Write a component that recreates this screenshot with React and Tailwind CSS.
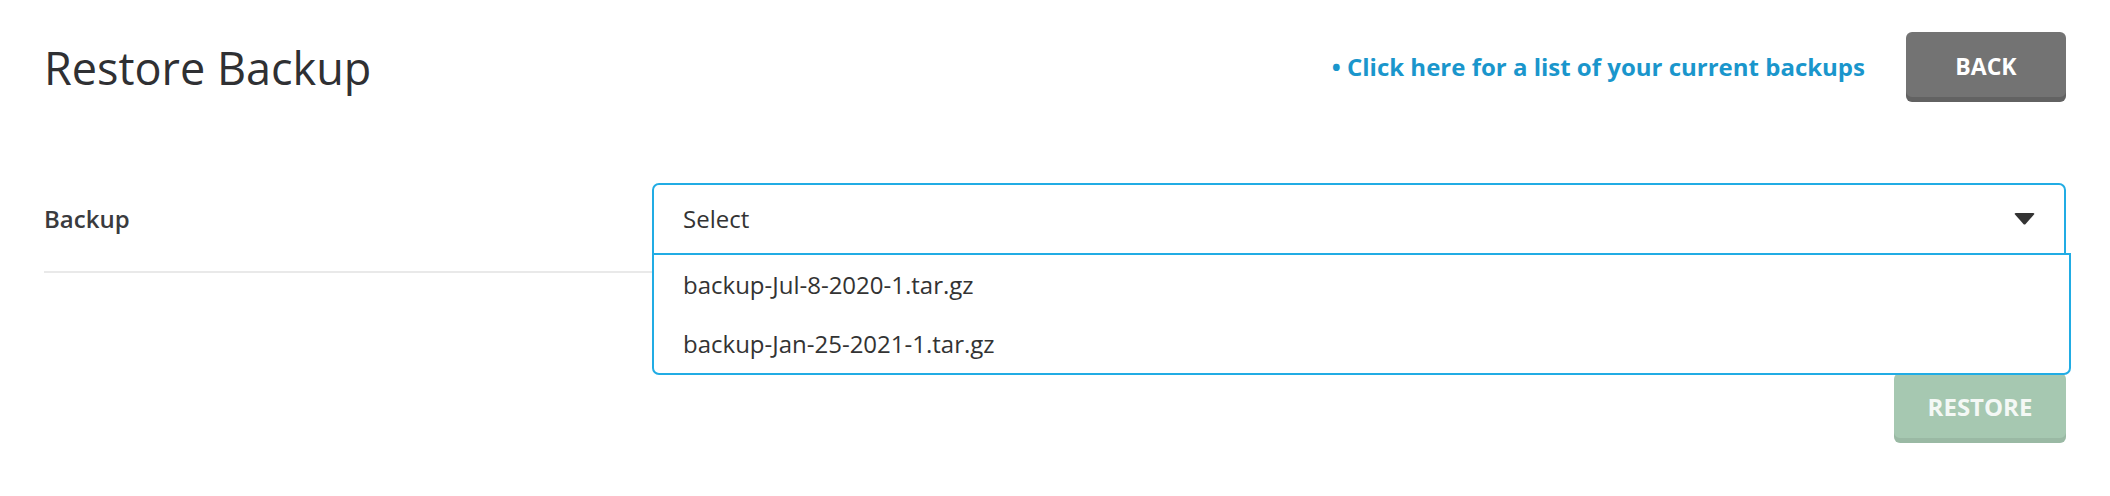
export default function App() {
  const backups = ['backup-Jul-8-2020-1.tar.gz', 'backup-Jan-25-2021-1.tar.gz']

  return (
    <div className="min-h-screen bg-white px-[44px] pt-[32px] font-['Open_Sans',sans-serif] text-[#333]">
      {/* Header */}
      <div className="flex h-[70px] items-center justify-between">
        <h1 className="text-[45px] leading-none font-normal text-[#2f3033]">Restore Backup</h1>
        <div className="flex items-center gap-[41px]">
          <a href="#" className="text-[24px] font-bold text-[#1a96cc]">• Click here for a list of your current backups</a>
          <button className="h-[70px] w-[160px] rounded-[6px] bg-[#737373] text-[23px] font-bold text-white shadow-[inset_0_-5px_0_rgba(0,0,0,0.14)]">
            <span className="relative -top-[1px]">BACK</span>
          </button>
        </div>
      </div>

      {/* Form row */}
      <div className="mt-[81px] flex items-center border-b-2 border-[#e9e9e9] pb-[16px]">
        <label className="w-[608px] shrink-0 text-[24px] font-semibold text-[#3a3b3e]">Backup</label>
        <div className="relative flex-1">
          <div className="flex h-[72px] items-center justify-between rounded-t-[7px] border-2 border-[#21ace4] pl-[29px] pr-[29px]">
            <span className="text-[24px] text-[#333]">Select</span>
            <svg width="21" height="12" viewBox="0 0 21 12" className="text-[#333]">
              <path d="M1 1.5 Q0 0 2 0 H19 Q21 0 20 1.5 L11.6 11 Q10.5 12 9.4 11 Z" fill="currentColor" />
            </svg>
          </div>
          <ul className="absolute left-0 -right-[5px] top-[calc(100%-2px)] z-10 rounded-b-[7px] border-2 border-[#21ace4] bg-white">
            {backups.map((b) => (
              <li key={b} className="flex h-[59px] items-center pl-[29px] text-[24px] text-[#333]">{b}</li>
            ))}
          </ul>
        </div>
      </div>

      {/* Actions */}
      <div className="mt-[100px] flex justify-end">
        <button disabled className="h-[70px] w-[172px] rounded-[6px] bg-[#a6c8b1] text-[24px] font-bold text-[#f4f8f5] shadow-[inset_0_-5px_0_rgba(0,0,0,0.07)]">
          <span className="relative -top-[1px]">RESTORE</span>
        </button>
      </div>
    </div>
  )
}
